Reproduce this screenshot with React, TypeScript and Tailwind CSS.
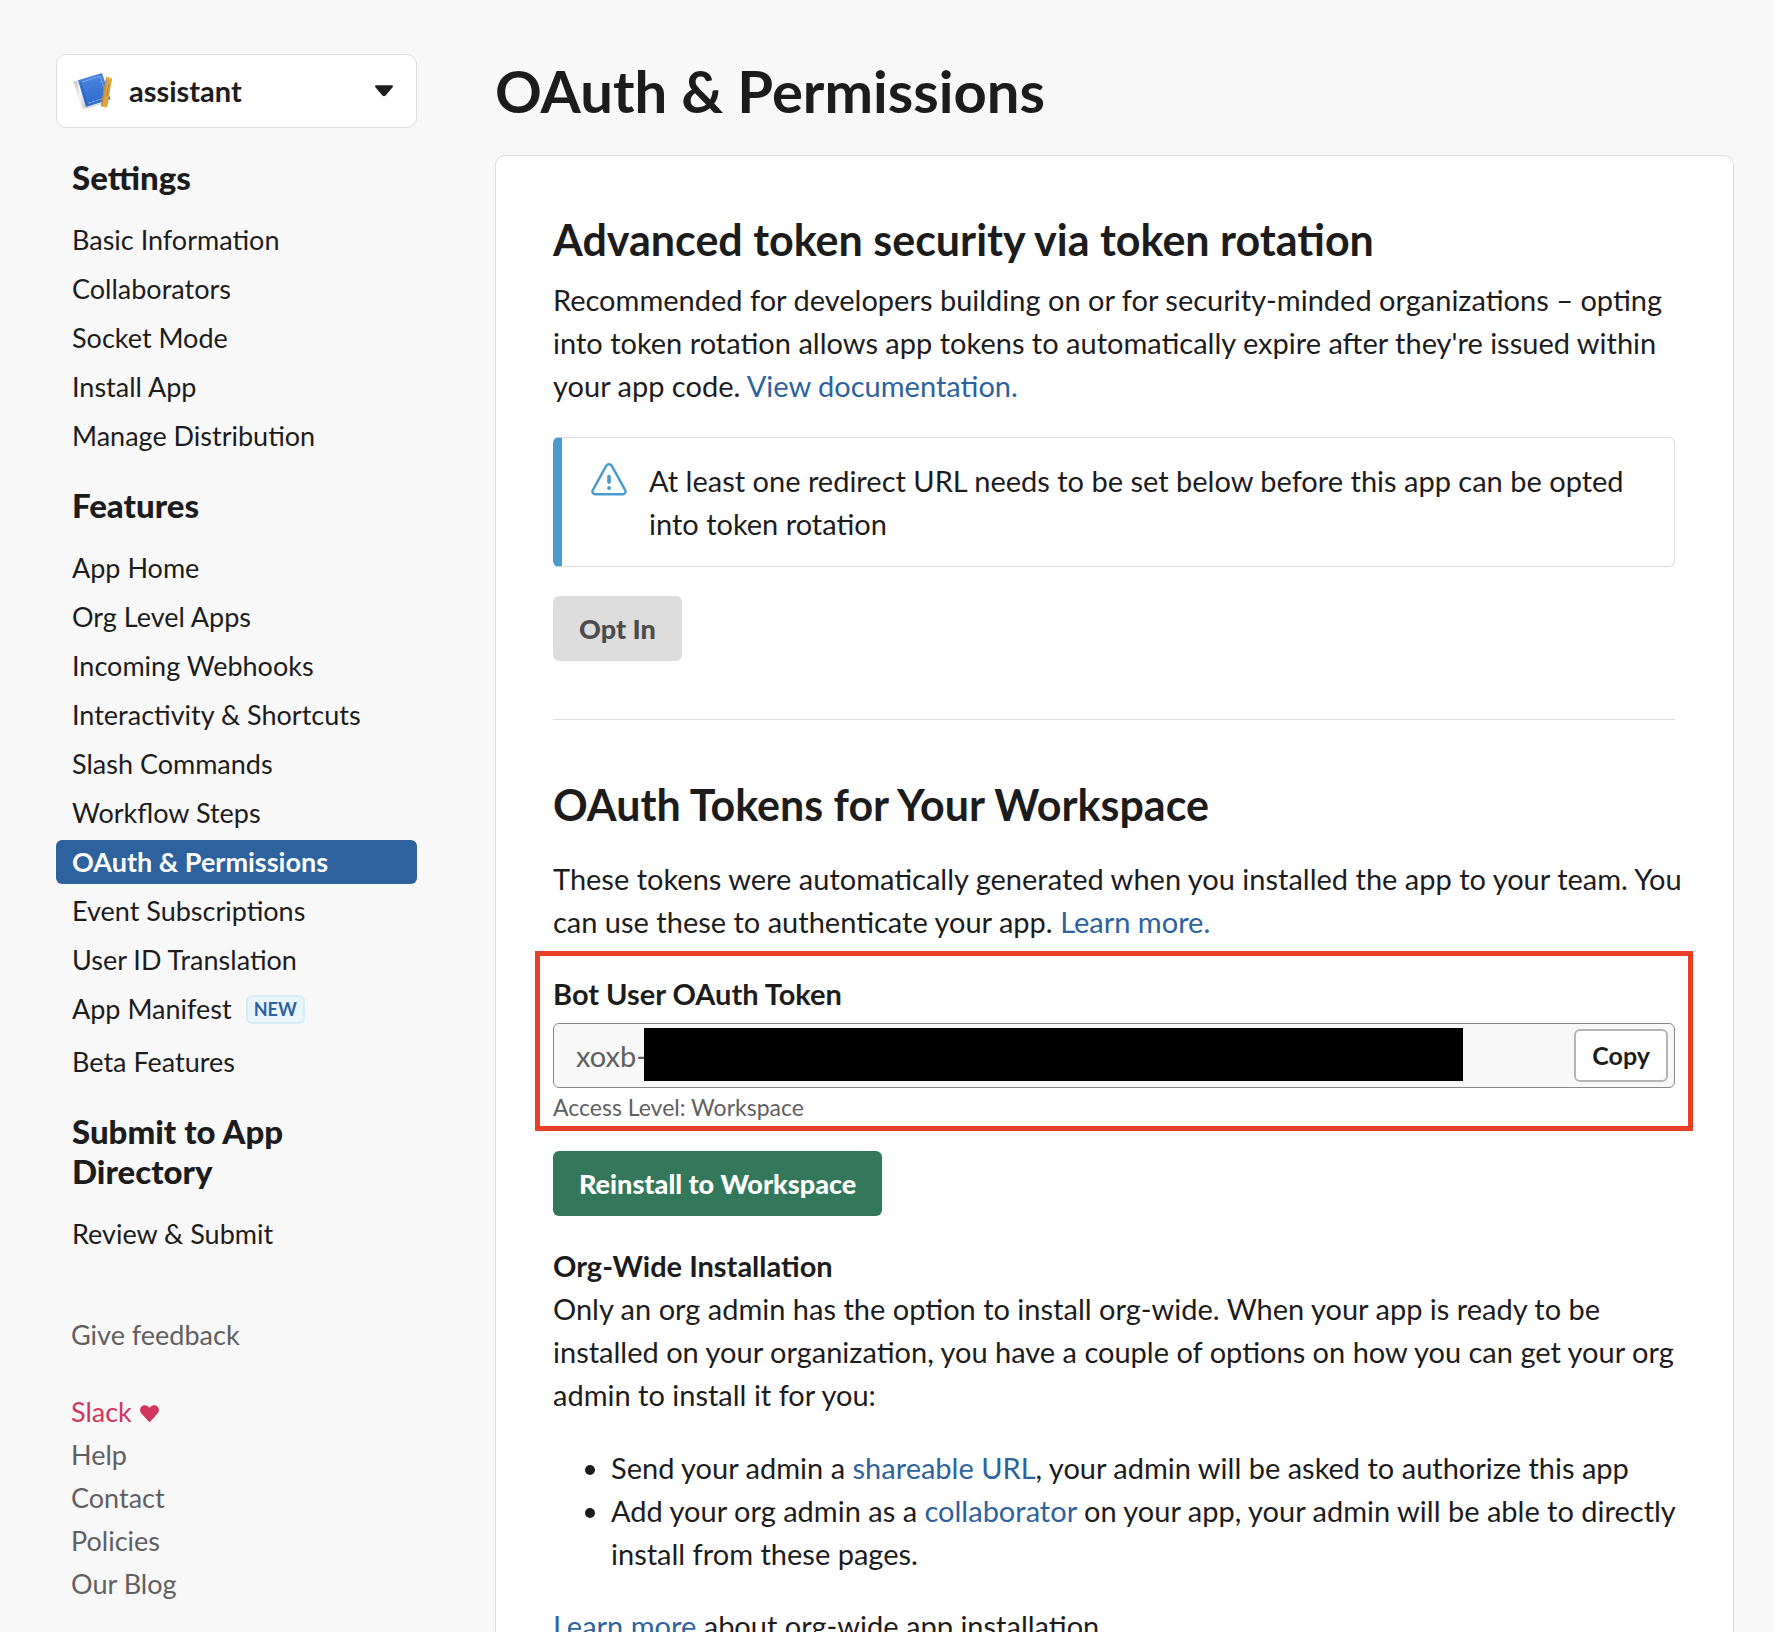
import React from 'react';

type NavItem = { label: string; active?: boolean; badge?: string };

const settings: NavItem[] = [
  { label: 'Basic Information' },
  { label: 'Collaborators' },
  { label: 'Socket Mode' },
  { label: 'Install App' },
  { label: 'Manage Distribution' },
];

const features: NavItem[] = [
  { label: 'App Home' },
  { label: 'Org Level Apps' },
  { label: 'Incoming Webhooks' },
  { label: 'Interactivity & Shortcuts' },
  { label: 'Slash Commands' },
  { label: 'Workflow Steps' },
  { label: 'OAuth & Permissions', active: true },
  { label: 'Event Subscriptions' },
  { label: 'User ID Translation' },
  { label: 'App Manifest', badge: 'NEW' },
  { label: 'Beta Features' },
];

function AppIcon() {
  return (
    <svg viewBox="0 0 42 40" className="h-10 w-[42px]" aria-hidden="true">
      <defs>
        <linearGradient id="cover" x1="0" y1="0" x2="0" y2="1">
          <stop offset="0" stopColor="#4a86dc" />
          <stop offset="1" stopColor="#3069cf" />
        </linearGradient>
        <linearGradient id="spine" x1="0" y1="0" x2="1" y2="0">
          <stop offset="0" stopColor="#b9b9b9" />
          <stop offset="0.5" stopColor="#f4f4f4" />
          <stop offset="1" stopColor="#c4c4c4" />
        </linearGradient>
      </defs>
      <path d="M12 37.5 37 30.5" stroke="#00000022" strokeWidth="2" />
      <path d="M1.5 10.5 6 9.2 14 36.3 11 37.8 9.8 37z" fill="url(#spine)" />
      <path d="M6 9.3 30 2 38.5 28.2 14 36z" fill="url(#cover)" />
      <path d="M10.5 10.8 28.2 5.2 34.8 26.2 16.5 32.2" fill="none" stroke="#a9c8f5" strokeWidth="0.7" strokeDasharray="3 0.8" />
      <path d="M8.4 11.5 15.2 34" stroke="#2456a8" strokeWidth="0.8" />
      <path d="M34.2 5.8 40.2 7.2 35.2 36.6 29 35.2z" fill="#dba545" />
      <path d="M34.2 5.8 35.6 6.1 30.4 35.5 29 35.2z" fill="#c48f35" />
      <path d="M36.8 13 34.8 25" stroke="#a87628" strokeWidth="0.8" />
      <path d="M34.2 5.8 40.2 7.2 39.9 8.8 33.9 7.4z" fill="#edbd64" />
    </svg>
  );
}

function NavHeading({ children }: { children: React.ReactNode }) {
  return <h3 className="px-4 text-[33px] leading-10 font-black">{children}</h3>;
}

function NavList({ items }: { items: NavItem[] }) {
  return (
    <ul className="mt-[21px] flex flex-col gap-[5px]">
      {items.map((item) => (
        <li key={item.label} className={item.badge ? 'pb-1' : undefined}>
          <a
            href="#"
            aria-current={item.active ? 'page' : undefined}
            className={
              item.active
                ? 'flex h-11 items-center rounded-md bg-[#2d629e] px-4 text-[27px] font-bold text-white'
                : 'flex h-11 items-center px-4 text-[27px]'
            }
          >
            {item.label}
            {item.badge && (
              <span className="ml-[14px] rounded-md border-2 border-[#d8ebf6] bg-[#e8f5fa] px-[6px] text-lg leading-[25px] font-bold text-[#2d629e]">
                {item.badge}
              </span>
            )}
          </a>
        </li>
      ))}
    </ul>
  );
}

function TextLink({ children }: { children: React.ReactNode }) {
  return (
    <a href="#" className="text-[#2d629e]">
      {children}
    </a>
  );
}

function WarningIcon() {
  return (
    <svg viewBox="0 0 36 33" className="mt-1 h-[33px] w-9 shrink-0" fill="none" stroke="#4a9acd" aria-hidden="true">
      <path
        d="M15.2 2.8a3.3 3.3 0 0 1 5.6 0L34.2 27.1c1 2-.3 4.1-2.5 4.1H4.3c-2.2 0-3.5-2.1-2.5-4.1z"
        strokeWidth="2.4"
        strokeLinejoin="round"
      />
      <path d="M18 13.5v5.6" strokeWidth="3.6" strokeLinecap="round" />
      <circle cx="18" cy="25" r="1.9" fill="#4a9acd" stroke="none" />
    </svg>
  );
}

export default function App() {
  return (
    <div className="flex min-h-screen items-start bg-[#f8f8f8] pr-10 pl-14 font-['Lato',sans-serif] text-[#1d1c1d]">
      <aside className="w-[361px] shrink-0 pt-[54px]">
        <div className="relative">
          <select
            aria-label="App"
            className="h-[74px] w-full appearance-none rounded-[10px] border border-[#dddddd] bg-white pl-[72px] text-[29px] font-bold"
          >
            <option>assistant</option>
          </select>
          <div className="pointer-events-none absolute inset-y-0 left-4 flex items-center">
            <AppIcon />
          </div>
          <div className="pointer-events-none absolute inset-y-0 right-6 flex items-center">
            <svg viewBox="0 0 18 12" className="h-3 w-[18px]" fill="#1d1c1d" aria-hidden="true">
              <path d="M1.3 0.3h15.4c1.1 0 1.6 1.2.9 2L10.6 10.6c-.9 1-2.3 1-3.2 0L.4 2.300C-.3 1.500.2.3 1.300.3z" />
            </svg>
          </div>
        </div>

        <nav className="mt-[29px] flex flex-col gap-[27px]" aria-label="App configuration">
          <section>
            <NavHeading>Settings</NavHeading>
            <NavList items={settings} />
          </section>
          <section>
            <NavHeading>Features</NavHeading>
            <NavList items={features} />
          </section>
          <section>
            <NavHeading>Submit to App Directory</NavHeading>
            <NavList items={[{ label: 'Review & Submit' }]} />
          </section>
        </nav>

        <footer className="mt-[57px] px-[15px] text-[27px] leading-[43px] text-[#616061]">
          <a href="#" className="block">
            Give feedback
          </a>
          <ul className="mt-[34px]">
            <li>
              <a href="#" className="flex items-center gap-2 text-[#d1365e]">
                Slack
                <svg viewBox="0 0 19 17" className="mt-[3px] h-[17px] w-[19px]" fill="#d1365e" aria-hidden="true">
                  <path d="M9.500 3C8.300 1 6.700.2 5 .2 2.200.2.100 2.300.100 5c0 1.700.7 2.900 1.800 4l6.500 7.300c.6.700 1.600.7 2.200 0L17.100 9c1.100-1.100 1.800-2.300 1.800-4 0-2.700-2.100-4.800-4.900-4.800-1.700 0-3.300.8-4.500 2.800z" />
                </svg>
              </a>
            </li>
            {['Help', 'Contact', 'Policies', 'Our Blog'].map((label) => (
              <li key={label}>
                <a href="#">{label}</a>
              </li>
            ))}
          </ul>
        </footer>
      </aside>

      <main className="ml-[78px] min-w-0 flex-1 pt-14">
        <h1 className="text-[58px] leading-[70px] font-bold">OAuth &amp; Permissions</h1>

        <div className="mt-[29px] rounded-t-[10px] border border-b-0 border-[#dddddd] bg-white pt-14 pr-[58px] pb-14 pl-[57px] text-[29px] leading-[43px]">
          <section>
            <h2 className="text-[43px] leading-[56px] font-bold">Advanced token security via token rotation</h2>
            <p className="mt-[10px]">
              Recommended for developers building on or for security-minded organizations – opting into token rotation
              allows app tokens to automatically expire after they're issued within your app code.{' '}
              <TextLink>View documentation.</TextLink>
            </p>
            <div className="mt-[30px] flex gap-[22px] rounded-md border border-l-[9px] border-[#dddddd] border-l-[#4a9acd] py-[21px] pr-12 pl-[29px]">
              <WarningIcon />
              <p>At least one redirect URL needs to be set below before this app can be opted into token rotation</p>
            </div>
            <button
              type="button"
              disabled
              className="mt-[29px] h-[65px] rounded-md bg-[#dddddd] px-[26px] text-[27px] font-black text-[#4d4c4d]"
            >
              Opt In
            </button>
          </section>

          <hr className="mt-[58px] border-[#dddddd]" />

          <section className="mt-[57px]">
            <h2 className="text-[43px] leading-[56px] font-bold">OAuth Tokens for Your Workspace</h2>
            <p className="-mr-3 mt-6">
              These tokens were automatically generated when you installed the app to your team. You can use these to
              authenticate your app. <TextLink>Learn more.</TextLink>
            </p>

            <div className="-mx-[18px] mt-2 border-[5px] border-[#e94025] px-[13px] pt-4">
              <label htmlFor="bot-token" className="block font-bold">
                Bot User OAuth Token
              </label>
              <div className="relative mt-2 flex h-[65px] items-center rounded-md border border-[#868686] bg-[#f8f8f8] pr-[6px]">
                <input
                  id="bot-token"
                  type="text"
                  readOnly
                  value="xoxb-"
                  className="h-full min-w-0 flex-1 bg-transparent pl-[22px] text-[29px] text-[#616061] outline-none"
                />
                <div className="absolute top-1 right-[211px] bottom-[6px] left-[90px] bg-black" />
                <button
                  type="button"
                  className="h-[53px] rounded-md border-2 border-[#b5b5b5] bg-white px-4 text-[25px] font-bold"
                >
                  Copy
                </button>
              </div>
              <p className="text-[23px] leading-[38px] text-[#616061]">Access Level: Workspace</p>
            </div>

            <button
              type="button"
              className="mt-5 h-[65px] rounded-md bg-[#34785c] px-[26px] text-[27px] font-black text-white"
            >
              Reinstall to Workspace
            </button>

            <h4 className="mt-7 font-bold">Org-Wide Installation</h4>
            <p>
              Only an org admin has the option to install org-wide. When your app is ready to be installed on your
              organization, you have a couple of options on how you can get your org admin to install it for you:
            </p>
            <ul className="-mr-3 mt-[30px] list-disc pl-[58px]">
              <li>
                Send your admin a <TextLink>shareable URL</TextLink>, your admin will be asked to authorize this app
              </li>
              <li>
                Add your org admin as a <TextLink>collaborator</TextLink> on your app, your admin will be able to
                directly install from these pages.
              </li>
            </ul>
            <p className="mt-[29px]">
              <TextLink>Learn more</TextLink> about org-wide app installation.
            </p>
          </section>
        </div>
      </main>
    </div>
  );
}
